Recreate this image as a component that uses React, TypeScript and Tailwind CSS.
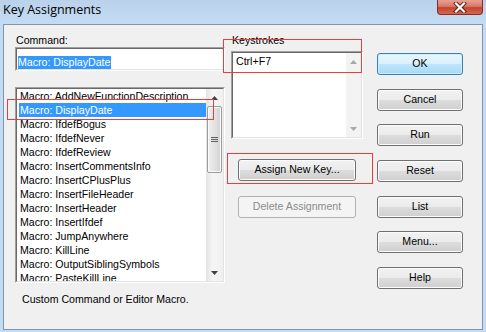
import React from "react";

const items = [
  "Macro: AddNewFunctionDescription",
  "Macro: DisplayDate",
  "Macro: IfdefBogus",
  "Macro: IfdefNever",
  "Macro: IfdefReview",
  "Macro: InsertCommentsInfo",
  "Macro: InsertCPlusPlus",
  "Macro: InsertFileHeader",
  "Macro: InsertHeader",
  "Macro: InsertIfdef",
  "Macro: JumpAnywhere",
  "Macro: KillLine",
  "Macro: OutputSiblingSymbols",
  "Macro: PasteKillLine",
];

const font = { fontFamily: '"Liberation Sans", Arial, sans-serif' };

function Btn({ label, def, disabled, w = "w-[86px]" }: { label: string; def?: boolean; disabled?: boolean; w?: string }) {
  if (disabled) {
    return (
      <div className={`${w} h-[22px] rounded-[3px] border border-[#adb2b5] bg-[#f4f4f4] flex items-center justify-center text-[10.6px] text-[#8c8c8c]`}>
        {label}
      </div>
    );
  }
  if (def) {
    return (
      <div className={`${w} h-[22px] rounded-[3px] border border-[#3c7fb1] bg-[linear-gradient(to_bottom,#eaf6fd_0%,#d9f0fc_50%,#bee6fd_50%,#a7d9f5_100%)] shadow-[inset_0_0_0_1px_#c4f0ff] flex items-center justify-center text-[10.6px] text-black`}>
        {label}
      </div>
    );
  }
  return (
    <div className={`${w} h-[22px] rounded-[3px] border border-[#707070] bg-[linear-gradient(to_bottom,#f2f2f2_0%,#ebebeb_50%,#dddddd_50%,#cfcfcf_100%)] shadow-[inset_0_0_0_1px_#fcfcfc] flex items-center justify-center text-[10.6px] text-black`}>
      {label}
    </div>
  );
}

function Arrow({ up, color = "#404040" }: { up?: boolean; color?: string }) {
  return (
    <svg width="7" height="4" viewBox="0 0 7 4">
      {up ? <path d="M3.5 0 L7 4 L0 4 Z" fill={color} /> : <path d="M0 0 L7 0 L3.5 4 Z" fill={color} />}
    </svg>
  );
}

function Sunken({ className, children }: { className: string; children: React.ReactNode }) {
  return (
    <div className={`${className} border-t border-l border-[#a0a0a0] border-b-white border-r-white border-b border-r`}>
      <div className="w-full h-full border-t border-l border-[#696969] border-b border-r border-b-[#e3e3e3] border-r-[#e3e3e3] bg-white flex overflow-hidden">
        {children}
      </div>
    </div>
  );
}

export default function App() {
  return (
    <div className="relative w-[486px] h-[332px] bg-[linear-gradient(to_bottom,#b9d1ea,#c4dcf3_24px,#c4dcf3)] flex flex-col overflow-hidden" style={font}>
      {/* title bar */}
      <div className="h-[24px] flex items-start justify-between">
        <div className="pl-[3px] pt-[2px] text-[12.5px] text-black leading-[16px]" style={{ fontFamily: '"Open Sans", "Noto Sans", sans-serif' }}>
          Key Assignments
        </div>
        <div className="mr-[3px] w-[46px] h-[15px] rounded-b-[4px] border border-t-0 border-[#8a2c22] bg-[linear-gradient(to_bottom,#e6a295_0%,#d67a66_45%,#c7432e_55%,#d06a52_100%)] flex items-center justify-center">
          <svg width="14" height="11" viewBox="0 0 14 11">
            <path d="M3 1.5 L11 9.5 M11 1.5 L3 9.5" stroke="#5a1a14" strokeWidth="4" strokeLinecap="square" />
            <path d="M3 1.5 L11 9.5 M11 1.5 L3 9.5" stroke="#ffffff" strokeWidth="2.2" strokeLinecap="square" />
          </svg>
        </div>
      </div>

      {/* client */}
      <div className="mx-[3px] h-[306px] border border-[#7e95ad] bg-[#f0f0f0] flex text-[10.6px] text-black">
        {/* left column */}
        <div className="ml-[11px] w-[210px] flex flex-col">
          <div className="mt-[9px] h-[13px] leading-[13px] pl-[1px]">Command:</div>
          <Sunken className="h-[24px] w-[210px]">
            <div className="pl-[1px] pt-[6px]">
              <span className="bg-[#3399ff] text-white leading-[13px] inline-block pr-[1px]">Macro: DisplayDate</span>
            </div>
          </Sunken>
          <Sunken className="mt-[16px] h-[196px] w-[210px]">
            <div className="flex-1 flex flex-col pl-[2px]">
              {items.map((it, i) => (
                <div key={it} className={`h-[14px] shrink-0 leading-[14px] pl-[1px] whitespace-nowrap ${i === 1 ? "bg-[#3399ff] text-white" : ""}`}>
                  {it}
                </div>
              ))}
            </div>
            <div className="w-[17px] h-full bg-[linear-gradient(to_right,#e3e3e3,#f5f5f5_40%,#f0f0f0)] flex flex-col items-center">
              <div className="h-[17px] w-full flex items-center justify-center"><Arrow up /></div>
              <div className="w-[15px] h-[67px] rounded-[2px] border border-[#9c9c9c] bg-[linear-gradient(to_right,#f0f0f0,#e2e2e2_50%,#d2d2d2)] shadow-[inset_0_0_0_1px_#fafafa] flex flex-col items-center justify-center gap-[1px]">
                <div className="w-[7px] h-[1px] bg-[#5e5e5e]" />
                <div className="w-[7px] h-[1px] bg-[#5e5e5e]" />
                <div className="w-[7px] h-[1px] bg-[#5e5e5e]" />
              </div>
              <div className="flex-1" />
              <div className="h-[17px] w-full flex items-center justify-center"><Arrow /></div>
            </div>
          </Sunken>
          <div className="mt-[10px] h-[13px] leading-[13px] pl-[7px]">Custom Command or Editor Macro.</div>
        </div>

        {/* middle column */}
        <div className="ml-[6px] w-[132px] flex flex-col">
          <div className="mt-[9px] h-[13px] leading-[13px] pl-[1px]">Keystrokes</div>
          <Sunken className="mt-[4px] h-[88px] w-[132px]">
            <div className="flex-1 pl-[3px] pt-[1px] leading-[14px]">Ctrl+F7</div>
            <div className="w-[15px] h-full bg-[#f3f3f3] flex flex-col justify-between items-center">
              <div className="h-[17px] flex items-center"><Arrow up color="#a8a8a8" /></div>
              <div className="h-[17px] flex items-center"><Arrow color="#a8a8a8" /></div>
            </div>
          </Sunken>
          <div className="mt-[20px] ml-[7px]"><Btn label="Assign New Key..." w="w-[118px]" /></div>
          <div className="mt-[15px] ml-[7px]"><Btn label="Delete Assignment" w="w-[118px]" disabled /></div>
        </div>

        {/* right column */}
        <div className="ml-[14px] mt-[28px] flex flex-col gap-[13.7px]">
          <Btn label="OK" def />
          <Btn label="Cancel" />
          <Btn label="Run" />
          <Btn label="Reset" />
          <Btn label="List" />
          <Btn label="Menu..." />
          <Btn label="Help" />
        </div>
      </div>

      {/* red annotation boxes */}
      <div className="absolute left-[7px] top-[99px] w-[207px] h-[21px] border border-[#ee3b3b]" />
      <div className="absolute left-[223px] top-[39px] w-[139px] h-[34px] border border-[#ee3b3b]" />
      <div className="absolute left-[227px] top-[153px] w-[146px] h-[31px] border border-[#ee3b3b]" />
    </div>
  );
}
